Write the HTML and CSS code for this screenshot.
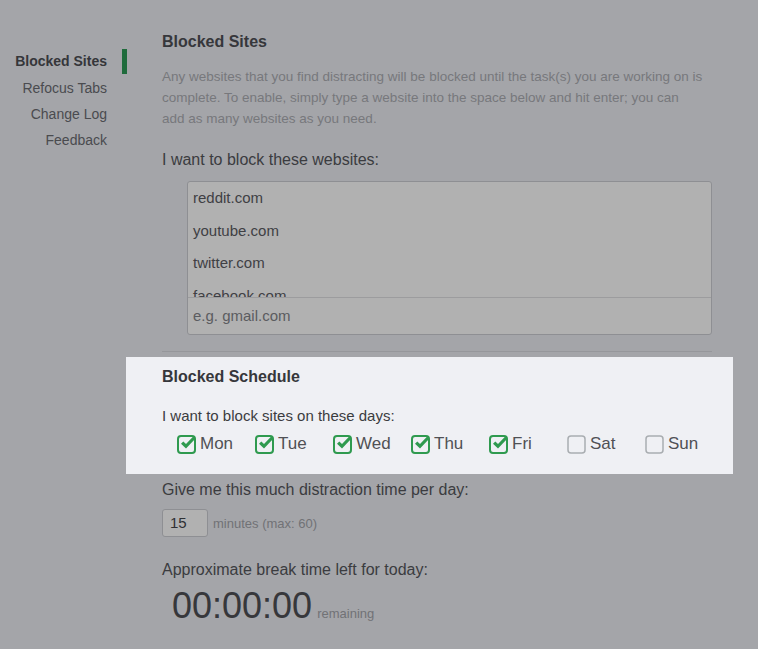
FILE: index.html
```html
<!DOCTYPE html>
<html>
<head>
<meta charset="utf-8">
<link rel="stylesheet" href="styles.css">
</head>
<body>
<div class="page">
  <nav class="sidebar">
    <a class="nav-item active">Blocked Sites</a>
    <a class="nav-item">Refocus Tabs</a>
    <a class="nav-item">Change Log</a>
    <a class="nav-item">Feedback</a>
  </nav>
  <main class="main">
    <h2 class="heading">Blocked Sites</h2>
    <p class="desc">Any websites that you find distracting will be blocked until the task(s) you are working on is complete. To enable, simply type a website into the space below and hit enter; you can<br>add as many websites as you need.</p>
    <div class="label">I want to block these websites:</div>
    <div class="sites">
      <ul class="site-list">
        <li>reddit.com</li>
        <li>youtube.com</li>
        <li>twitter.com</li>
        <li>facebook.com</li>
      </ul>
      <div class="site-input">e.g. gmail.com</div>
    </div>
    <hr class="divider">
    <section class="highlight">
      <h2 class="heading">Blocked Schedule</h2>
      <div class="label sub">I want to block sites on these days:</div>
      <div class="days">
        <span class="day"><svg class="cb" viewBox="0 0 20 20"><rect x="1" y="2" width="17" height="17" rx="3" fill="none" stroke="#2f9a4f" stroke-width="2"/><path d="M4 9.8 L9 14.6 L18.5 4.6 L16.2 2.4 L9 10 L6.3 7.4 Z" fill="#2f9a4f"/></svg>Mon</span>
        <span class="day"><svg class="cb" viewBox="0 0 20 20"><rect x="1" y="2" width="17" height="17" rx="3" fill="none" stroke="#2f9a4f" stroke-width="2"/><path d="M4 9.8 L9 14.6 L18.5 4.6 L16.2 2.4 L9 10 L6.3 7.4 Z" fill="#2f9a4f"/></svg>Tue</span>
        <span class="day"><svg class="cb" viewBox="0 0 20 20"><rect x="1" y="2" width="17" height="17" rx="3" fill="none" stroke="#2f9a4f" stroke-width="2"/><path d="M4 9.8 L9 14.6 L18.5 4.6 L16.2 2.4 L9 10 L6.3 7.4 Z" fill="#2f9a4f"/></svg>Wed</span>
        <span class="day"><svg class="cb" viewBox="0 0 20 20"><rect x="1" y="2" width="17" height="17" rx="3" fill="none" stroke="#2f9a4f" stroke-width="2"/><path d="M4 9.8 L9 14.6 L18.5 4.6 L16.2 2.4 L9 10 L6.3 7.4 Z" fill="#2f9a4f"/></svg>Thu</span>
        <span class="day"><svg class="cb" viewBox="0 0 20 20"><rect x="1" y="2" width="17" height="17" rx="3" fill="none" stroke="#2f9a4f" stroke-width="2"/><path d="M4 9.8 L9 14.6 L18.5 4.6 L16.2 2.4 L9 10 L6.3 7.4 Z" fill="#2f9a4f"/></svg>Fri</span>
        <span class="day"><svg class="cb" viewBox="0 0 20 20"><rect x="1" y="2" width="17" height="17" rx="3" fill="none" stroke="#a9adb1" stroke-width="1.5"/></svg>Sat</span>
        <span class="day"><svg class="cb" viewBox="0 0 20 20"><rect x="1" y="2" width="17" height="17" rx="3" fill="none" stroke="#a9adb1" stroke-width="1.5"/></svg>Sun</span>
      </div>
    </section>
    <div class="label">Give me this much distraction time per day:</div>
    <div class="minutes-row">
      <div class="num-input">15</div>
      <span class="hint">minutes (max: 60)</span>
    </div>
    <div class="label">Approximate break time left for today:</div>
    <div class="timer"><span class="clock">00:00:00</span><span class="hint">remaining</span></div>
  </main>
</div>
</body>
</html>
```

FILE: styles.css
```css
html, body {
  margin: 0;
  padding: 0;
  background: #a4a5a9;
  font-family: "Liberation Sans", Arial, sans-serif;
  color: #3b3c40;
}
.page {
  display: flex;
  align-items: flex-start;
}
.sidebar {
  width: 127px;
  padding-top: 49px;
  display: flex;
  flex-direction: column;
  flex-shrink: 0;
}
.nav-item {
  display: block;
  text-align: right;
  font-size: 14px;
  line-height: 26px;
  height: 26px;
  padding-right: 15px;
  border-right: 5px solid transparent;
  color: #4a4b4f;
}
.nav-item.active {
  font-weight: bold;
  color: #35363a;
  border-right-color: #1f6b3c;
  height: 25px;
  line-height: 25px;
  margin-bottom: 1px;
}
.main {
  margin-left: 35px;
  width: 550px;
  padding-top: 32px;
}
.heading {
  margin: 0;
  font-size: 16px;
  line-height: 20px;
  font-weight: bold;
  color: #36373b;
}
.desc {
  margin: 14px 0 0;
  font-size: 13.5px;
  line-height: 21px;
  color: #77787c;
  width: 550px;
}
.label {
  font-size: 16px;
  line-height: 20px;
  color: #3b3c40;
  margin-top: 21px;
}
.sites {
  margin: 11px 0 0 25px;
  width: 523px;
  height: 152px;
  border: 1px solid #8e8f93;
  border-radius: 3px;
  background: #b1b1b1;
  display: flex;
  flex-direction: column;
}
.site-list {
  list-style: none;
  margin: 0;
  padding: 0 0 0 5px;
  height: 117px;
  overflow: hidden;
  border-bottom: 1px solid #9c9c9e;
}
.site-list li {
  font-size: 15px;
  line-height: 20px;
  height: 32.5px;
  padding-top: 6px;
  box-sizing: border-box;
  color: #3f4044;
}
.site-input {
  font-size: 15px;
  line-height: 36px;
  padding-left: 5px;
  color: #5b5c60;
}
.divider {
  margin: 16px 0 0;
  border: 0;
  border-top: 1px solid #96979b;
  height: 0;
}
.highlight {
  margin: 5px 0 0 -36px;
  padding: 10px 21px 18px 36px;
  width: 550px;
  background: #eff0f4;
}
.highlight .label.sub {
  margin-top: 19px;
  font-size: 15px;
}
.days {
  display: flex;
  margin-top: 6px;
  padding-left: 15px;
}
.day {
  display: flex;
  align-items: center;
  flex: 0 0 78px;
  font-size: 17px;
  line-height: 24px;
  color: #505155;
}
.day:last-child {
  flex-basis: auto;
}
.cb {
  width: 20px;
  height: 20px;
  margin-right: 3px;
}
.label + .minutes-row { margin-top: 9px; }
.highlight + .label { margin-top: 6px; }
.minutes-row + .label { margin-top: 23px; }
.minutes-row {
  display: flex;
  align-items: center;
}
.num-input {
  width: 37px;
  height: 26px;
  border: 1px solid #8e8f93;
  border-radius: 3px;
  background: #b1b1b1;
  font-size: 15px;
  line-height: 26px;
  padding-left: 7px;
  color: #2f3034;
}
.hint {
  font-size: 13px;
  color: #717276;
  margin-left: 5px;
}
.timer {
  display: flex;
  align-items: baseline;
  margin-top: 6px;
  padding-left: 10px;
}
.clock {
  font-size: 36px;
  line-height: 40px;
  color: #36373b;
}
```
